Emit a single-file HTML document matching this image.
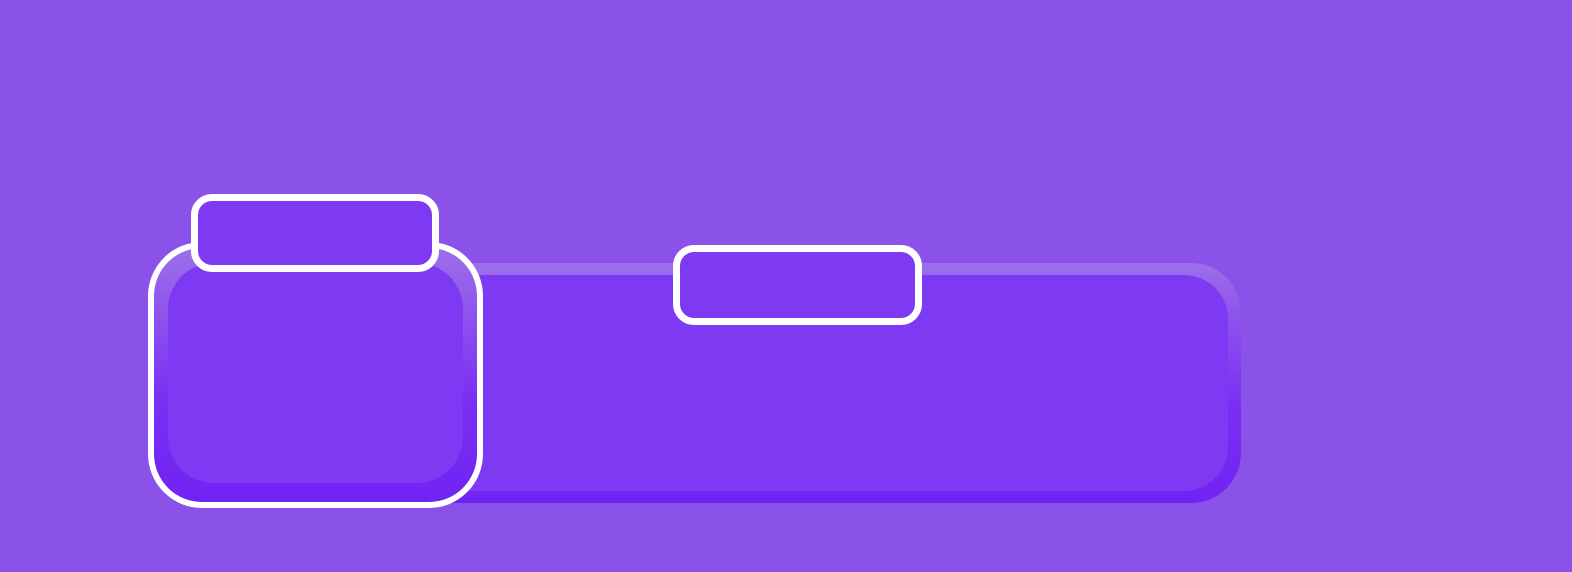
<!DOCTYPE html>
<html><head><style>
body{margin:0;width:1572px;height:572px;background:#8b52ea;position:relative;overflow:hidden}
.a{position:absolute;box-sizing:border-box}
</style></head><body>
<div class="a" style="left:200px;top:263px;width:1041px;height:240px;border-radius:50px;background:linear-gradient(#9c70e9 0%,#8e55ec 20%,#7a2ff3 60%,#7023f3 100%)"></div>
<div class="a" style="left:200px;top:275px;width:1028px;height:216px;border-radius:44px;background:#7e3af2"></div>

<div class="a" style="left:148px;top:242px;width:335px;height:266px;border-radius:54px;border:6px solid #fff;background:linear-gradient(#9c70e9 0%,#8e55ec 25%,#7a2ff3 60%,#7023f3 100%)"></div>
<div class="a" style="left:168px;top:263px;width:295px;height:220px;border-radius:46px;background:#7e3af2"></div>

<div class="a" style="left:191px;top:194px;width:248px;height:78px;border-radius:21px;border:7px solid #fff;background:#7e3af2"></div>
<div class="a" style="left:673px;top:245px;width:249px;height:80px;border-radius:21px;border:7px solid #fff;background:#7e3af2"></div>
</body></html>
